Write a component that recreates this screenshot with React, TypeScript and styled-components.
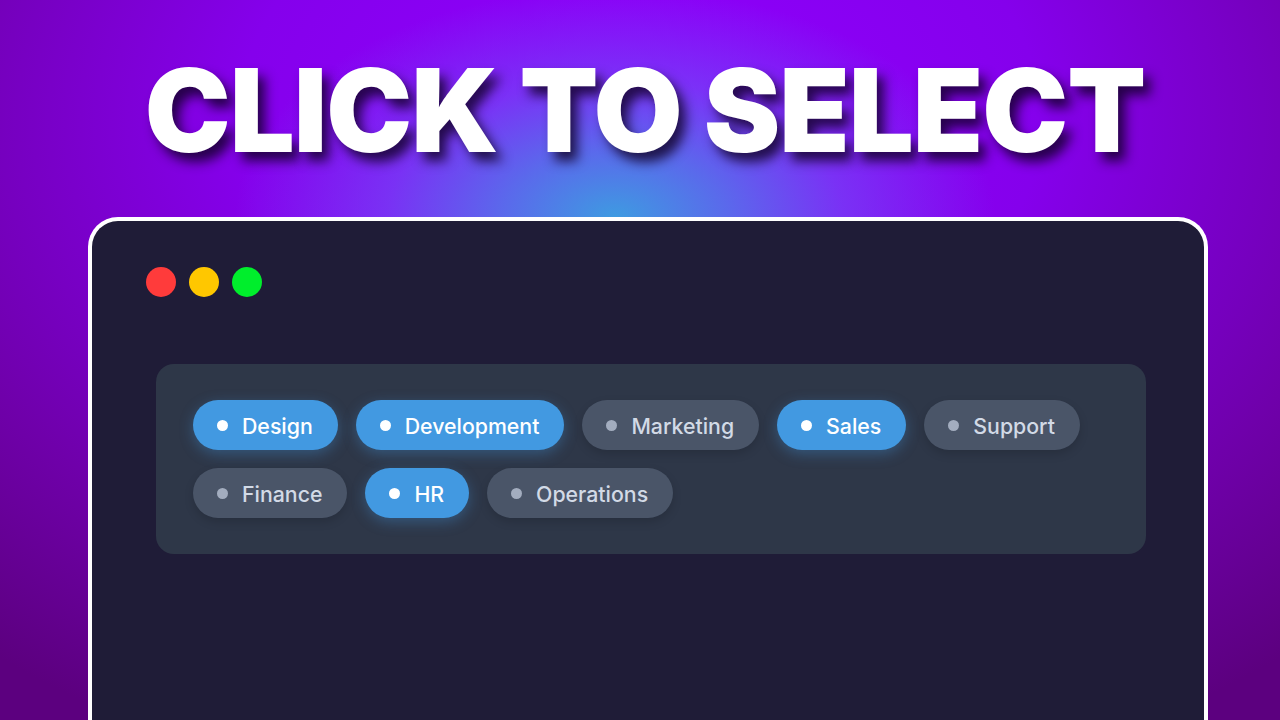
import styled, { createGlobalStyle } from 'styled-components'
import { useState } from 'react'

const GlobalStyle = createGlobalStyle`
  html, body {
    margin: 0;
    padding: 0;
    height: 100%;
  }
  body {
    font-family: Inter, "Noto Sans", sans-serif;
    overflow: hidden;
  }
`

const tagNames = ['Design', 'Development', 'Marketing', 'Sales', 'Support', 'Finance', 'HR', 'Operations']

function App() {
    const [selected, setSelected] = useState<string[]>(['Design', 'Development', 'Sales', 'HR'])

    const toggle = (name: string) => {
        setSelected((prev) => prev.includes(name) ? prev.filter((n) => n !== name) : [...prev, name])
    }

    return (
        <>
            <GlobalStyle/>
            <Page>
                <Title>CLICK TO SELECT</Title>
                <Window>
                    <Dots>
                        <Dot color="#ff3b3b"/>
                        <Dot color="#ffc700"/>
                        <Dot color="#00ee2c"/>
                    </Dots>
                    <Panel>
                        {tagNames.map((name) => {
                            const active = selected.includes(name)
                            return (
                                <Chip key={name} $active={active} onClick={() => toggle(name)}>
                                    <ChipDot $active={active}/>
                                    {name}
                                </Chip>
                            )
                        })}
                    </Panel>
                </Window>
            </Page>
        </>
    )
}

const Page = styled.div`
  width: 1280px;
  height: 720px;
  overflow: hidden;
  display: flex;
  flex-direction: column;
  align-items: center;
  background:
    radial-gradient(ellipse 380px 230px at 615px 218px, rgba(62, 155, 225, 1) 0%, rgba(88, 110, 235, 0.95) 30%, rgba(115, 70, 245, 0.7) 60%, rgba(140, 0, 255, 0) 100%),
    radial-gradient(ellipse 1000px 700px at 640px 120px, #8f00ff 0%, #8500ec 40%, #6f00aa 75%, #5c007f 100%);
`

const Title = styled.h1`
  margin: 47px 0 0 10px;
  font-family: Inter, "Noto Sans", sans-serif;
  font-weight: 900;
  font-size: 115px;
  line-height: 128px;
  letter-spacing: -1px;
  color: #ffffff;
  text-shadow: 7px 9px 12px rgba(15, 0, 35, 0.8);
  white-space: nowrap;
`

const Window = styled.div`
  margin: 42px 0 0 16px;
  width: 1120px;
  flex: 1;
  box-sizing: border-box;
  background: #1f1c37;
  border: 4px solid #ffffff;
  border-bottom: none;
  border-radius: 30px 30px 0 0;
  padding: 46px 58px 0 54px;
`

const Dots = styled.div`
  display: flex;
  gap: 13px;
`

const Dot = styled.span<{ color: string }>`
  width: 30px;
  height: 30px;
  border-radius: 50%;
  background: ${(p) => p.color};
`

const Panel = styled.div`
  margin-top: 67px;
  box-sizing: border-box;
  width: 990px;
  margin-left: 10px;
  background: #2e3748;
  border-radius: 18px;
  padding: 36px 37px 36px;
  display: flex;
  flex-wrap: wrap;
  gap: 18px 18px;
`

const Chip = styled.button<{ $active: boolean }>`
  display: flex;
  align-items: center;
  gap: 14px;
  height: 50px;
  padding: 1px 25px 0 24px;
  border: none;
  border-radius: 25px;
  font-family: Inter, "Noto Sans", sans-serif;
  font-size: 21.3px;
  font-weight: 500;
  cursor: pointer;
  background: ${(p) => (p.$active ? '#4299e1' : '#4a5568')};
  color: ${(p) => (p.$active ? '#ffffff' : '#d2dae6')};
  box-shadow: ${(p) => (p.$active
    ? '0 4px 14px rgba(66, 153, 225, 0.35)'
    : '0 4px 10px rgba(0, 0, 0, 0.15)')};
`

const ChipDot = styled.span<{ $active: boolean }>`
  width: 11px;
  height: 11px;
  border-radius: 50%;
  background: ${(p) => (p.$active ? '#ffffff' : '#a3adbf')};
`

export default App
